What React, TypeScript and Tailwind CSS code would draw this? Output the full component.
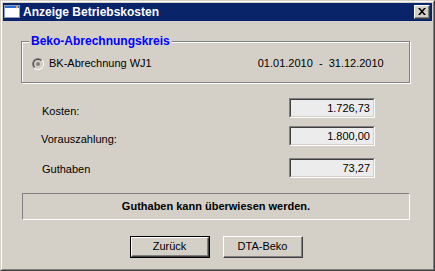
import React from "react";

const font = { fontFamily: '"Liberation Sans", Arial, sans-serif' };

function Field({ value }: { value: string }) {
  return (
    <div className="w-[86px] h-[20px] bg-[#ececec] border-t border-l border-t-[#808080] border-l-[#808080] border-b border-r border-b-white border-r-white">
      <div className="h-full w-full border-t border-l border-t-[#404040] border-l-[#404040] border-b border-r border-b-[#d4d0c8] border-r-[#d4d0c8] flex items-center justify-end pr-[3px] text-[11px] text-black">
        {value}
      </div>
    </div>
  );
}

function RaisedButton({ label, isDefault }: { label: string; isDefault?: boolean }) {
  const inner = (
    <div className="h-full w-full border-t border-l border-t-white border-l-white border-b border-r border-b-[#404040] border-r-[#404040]">
      <div className="h-full w-full border-b border-r border-b-[#808080] border-r-[#808080] flex items-center justify-center text-[11px] text-black">
        {label}
      </div>
    </div>
  );
  if (isDefault) {
    return <div className="w-[80px] h-[22px] border border-black">{inner}</div>;
  }
  return <div className="w-[80px] h-[22px]">{inner}</div>;
}

export default function App() {
  return (
    <div className="w-[435px] h-[271px] bg-[#d4d0c8] select-none" style={font}>
      <div className="w-[435px] h-[271px] border-t border-l border-t-[#d4d0c8] border-l-[#d4d0c8] border-b border-r border-b-[#404040] border-r-[#404040]">
        <div className="h-full w-full border-t border-l border-t-white border-l-white border-b border-r border-b-[#808080] border-r-[#808080] p-px flex flex-col">
          {/* Title bar */}
          <div className="h-[18px] bg-[#0a246a] flex items-center pl-[1px] pr-[2px]">
            <svg width="16" height="16" viewBox="0 0 16 16" className="shrink-0">
              <rect x="0.5" y="1.5" width="15" height="12" fill="#fff" stroke="#8a9ec4" />
              <rect x="1" y="2" width="14" height="2" fill="#2a6fd6" />
              <rect x="12" y="2" width="2" height="2" fill="#e8a040" />
            </svg>
            <span className="ml-[3px] text-white font-bold text-[12px] leading-none">Anzeige Betriebskosten</span>
            <div className="ml-auto w-[16px] h-[14px] bg-[#d4d0c8] border-t border-l border-t-white border-l-white border-b border-r border-b-[#404040] border-r-[#404040]">
              <div className="h-full w-full border-b border-r border-b-[#808080] border-r-[#808080] flex items-center justify-center">
                <svg width="8" height="7" viewBox="0 0 8 7">
                  <path d="M0 0h2l2 2.2L6 0h2L5 3.5 8 7H6L4 4.8 2 7H0l3-3.5z" fill="#000" />
                </svg>
              </div>
            </div>
          </div>

          {/* Body */}
          <div className="flex-1 flex flex-col pl-[18px] pr-[22px] pt-[20px] text-[11px] text-black">
            {/* Group box */}
            <div className="relative h-[42px] border border-[#808080] shadow-[1px_1px_0_#fff,inset_1px_1px_0_#fff]">
              <div className="absolute left-[7px] top-[-8px] px-[2px] bg-[#d4d0c8] text-[#0000ff] font-bold text-[12px] leading-[14px]">
                Beko-Abrechnungskreis
              </div>
              <div className="flex items-center h-full pt-[3px] pl-[10px]">
                <div className="w-[12px] h-[12px] rounded-full bg-[#d4d0c8] border-t border-l border-t-[#808080] border-l-[#808080] border-b border-r border-b-white border-r-white">
                  <div className="w-full h-full rounded-full border-t border-l border-t-[#404040] border-l-[#404040] border-b border-r border-b-[#d4d0c8] border-r-[#d4d0c8] flex items-center justify-center">
                    <div className="w-[4px] h-[4px] rounded-full bg-[#808080]" />
                  </div>
                </div>
                <span className="ml-[5px]">BK-Abrechnung WJ1</span>
                <span className="ml-[106px] whitespace-pre">01.01.2010  -  31.12.2010</span>
              </div>
            </div>

            {/* Amounts */}
            <div className="flex flex-col mt-[15px]">
              <div className="flex items-center h-[20px]">
                <span className="ml-[21px] pt-[6px]">Kosten:</span>
                <div className="ml-auto mr-[35px]"><Field value="1.726,73" /></div>
              </div>
              <div className="flex items-center h-[20px] mt-[8px]">
                <span className="ml-[20px] pt-[6px]">Vorauszahlung:</span>
                <div className="ml-auto mr-[35px]"><Field value="1.800,00" /></div>
              </div>
              <div className="flex items-center h-[20px] mt-[12px]">
                <span className="ml-[21px] pt-[2px]">Guthaben</span>
                <div className="ml-auto mr-[35px]"><Field value="73,27" /></div>
              </div>
            </div>

            {/* Message */}
            <div className="mt-[15px] ml-[1px] mr-0 h-[27px] border-t border-l border-t-[#808080] border-l-[#808080] border-b border-r border-b-white border-r-white flex items-center justify-center font-bold">
              Guthaben kann überwiesen werden.
            </div>

            {/* Buttons */}
            <div className="flex mt-[16px] ml-[109px] gap-[13px]">
              <RaisedButton label="Zurück" isDefault />
              <RaisedButton label="DTA-Beko" />
            </div>
          </div>
        </div>
      </div>
    </div>
  );
}
